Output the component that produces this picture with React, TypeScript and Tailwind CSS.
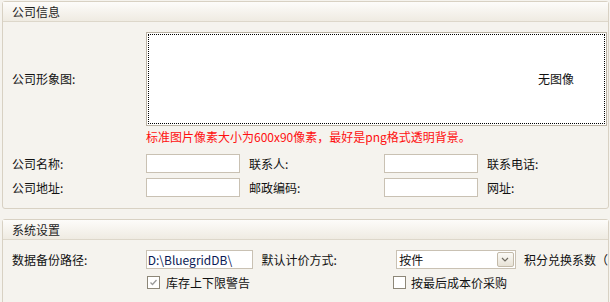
import React from "react";

const font = { fontFamily: '"Noto Sans CJK SC", "Noto Sans", sans-serif' };

function Header({ title }: { title: string }) {
  return (
    <div className="h-[20px] border-b border-[#ddd7ca] bg-gradient-to-b from-[#fdfcfa] to-[#efebe2] pl-[9px] flex items-center text-[12px] leading-none text-[#1e1e1e]">
      {title}
    </div>
  );
}

function Input({ w, value }: { w: string; value?: string }) {
  return (
    <div className={`${w} h-[19px] bg-white border border-[#c9c1b3] flex items-center pl-[1px] text-[12px] leading-none text-[#0a1a55]`}>
      {value}
    </div>
  );
}

function Check({ checked }: { checked?: boolean }) {
  return (
    <div className="w-[13px] h-[13px] border border-[#8d8778] bg-white flex items-center justify-center">
      {checked && (
        <svg width="9" height="9" viewBox="0 0 9 9">
          <path d="M1.5 4.5 L3.5 6.5 L7.5 2" fill="none" stroke="#9a9a9a" strokeWidth="1.3" />
        </svg>
      )}
    </div>
  );
}

export default function App() {
  return (
    <div className="w-[610px] h-[302px] overflow-hidden bg-[#f5f3ee] pt-[1px] pl-[2px] text-[12px] text-[#111]" style={font}>
      {/* Panel 1 */}
      <div className="w-[607px] h-[208px] border border-[#d8d1c3] rounded-[3px] bg-[#f5f3ee]">
        <Header title="公司信息" />
        <div className="pl-[9px] pt-[10px]">
          <div className="flex items-center">
            <div className="w-[134px] leading-none">公司形象图:</div>
            <div className="relative w-[461px] h-[94px] border border-[#b9b1a3] bg-white">
              <div className="absolute inset-[1px] border border-dotted border-black flex items-center justify-end pr-[30px]">
                <span className="leading-none text-[#111]">无图像</span>
              </div>
            </div>
          </div>
          <div className="ml-[134px] mt-[4px] text-[12px] leading-[14px] text-[#ff1010]">
            标准图片像素大小为600x90像素，最好是png格式透明背景。
          </div>
          <div className="mt-[10px] flex flex-col gap-[5px]">
            <div className="flex items-center">
              <div className="w-[134px] leading-none">公司名称:</div>
              <Input w="w-[94px]" />
              <div className="ml-[9px] w-[135px] leading-none">联系人:</div>
              <Input w="w-[94px]" />
              <div className="ml-[9px] leading-none">联系电话:</div>
            </div>
            <div className="flex items-center">
              <div className="w-[134px] leading-none">公司地址:</div>
              <Input w="w-[94px]" />
              <div className="ml-[9px] w-[135px] leading-none">邮政编码:</div>
              <Input w="w-[94px]" />
              <div className="ml-[9px] leading-none">网址:</div>
            </div>
          </div>
        </div>
      </div>

      {/* Panel 2 */}
      <div className="mt-[10px] w-[607px] h-[100px] border border-[#d8d1c3] rounded-[3px] bg-[#f5f3ee]">
        <Header title="系统设置" />
        <div className="pl-[9px] pt-[10px]">
          <div className="flex items-center">
            <div className="w-[134px] leading-none">数据备份路径:</div>
            <Input w="w-[107px]" value="D:\BluegridDB\" />
            <div className="ml-[9px] w-[135px] leading-none">默认计价方式:</div>
            <div className="w-[120px] h-[19px] bg-white border border-[#c9c1b3] flex items-center justify-between pl-[2px] pr-[1px]">
              <span className="leading-none">按件</span>
              <div className="w-[17px] h-[15px] border border-[#c3baa9] rounded-[2px] bg-gradient-to-b from-[#fbfaf6] to-[#e7e2d6] flex items-center justify-center">
                <svg width="8" height="5" viewBox="0 0 8 5">
                  <path d="M1 1 L4 4 L7 1" fill="none" stroke="#6f6a60" strokeWidth="1.2" />
                </svg>
              </div>
            </div>
            <div className="ml-[8px] leading-none whitespace-nowrap">积分兑换系数（</div>
          </div>
          <div className="mt-[7px] flex items-center">
            <div className="ml-[135px]"><Check checked /></div>
            <div className="ml-[6px] w-[227px] leading-none">库存上下限警告</div>
            <Check />
            <div className="ml-[5px] leading-none">按最后成本价采购</div>
          </div>
        </div>
      </div>
    </div>
  );
}
